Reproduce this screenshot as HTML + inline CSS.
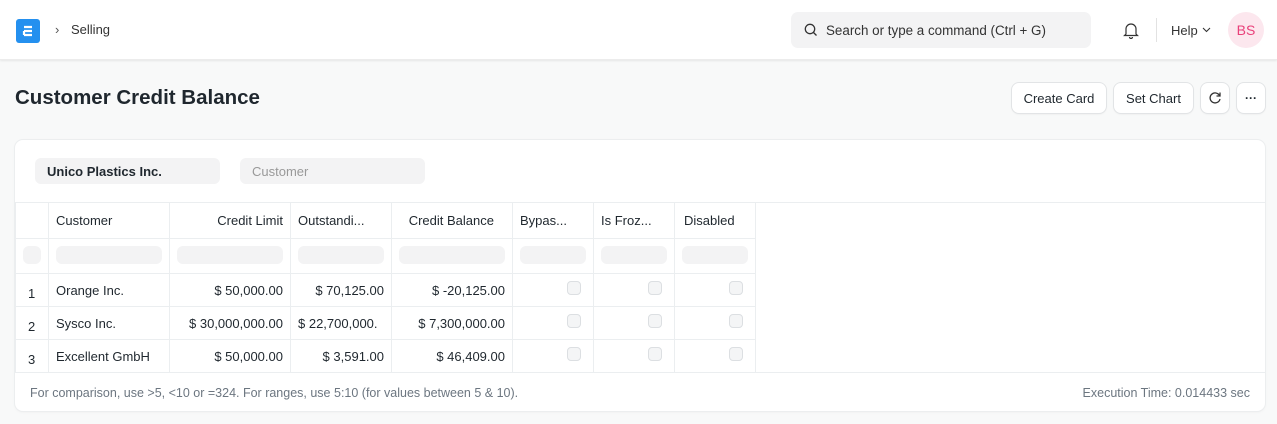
<!DOCTYPE html>
<html><head><style>
*{box-sizing:border-box;margin:0;padding:0}
body{width:1277px;height:424px;background:#f8f9f9;font-family:"Liberation Sans",sans-serif;color:#1f272e;position:relative;overflow:hidden;font-size:13px}
.nav{position:absolute;left:0;top:0;width:1277px;height:60px;background:#fff;box-shadow:0 1px 2px rgba(0,0,0,.08);border-bottom:1px solid #ececec}
.abs{position:absolute}
.btn{position:absolute;top:83px;height:30px;background:#fff;border-radius:7px;box-shadow:0 0 0 1px #e2e4e6,0 1px 2px rgba(0,0,0,.08);font-size:13px;display:flex;align-items:center;justify-content:center;color:#1f272e}
.card{position:absolute;left:15px;top:140px;width:1250px;height:271px;background:#fff;border-radius:8px;box-shadow:0 0 0 1px #eceeef,0 1px 3px rgba(0,0,0,.05)}
.field{position:absolute;top:158px;height:26px;width:185px;background:#f3f3f4;border-radius:6px;font-size:13px;padding:6px 12px}
.vl{position:absolute;width:1px;background:#ebeef0;top:203px;height:170px}
.hl{position:absolute;height:1px;background:#ebeef0;left:15px;width:741px}
.t{position:absolute;font-size:13px;color:#1f272e;white-space:nowrap}
.r{text-align:right}
.pill{position:absolute;top:246px;height:18px;background:#f3f3f4;border-radius:6px}
.cb{position:absolute;width:14px;height:14px;border:1px solid #dcdfe2;background:#f4f5f6;border-radius:4px}
</style></head><body>
<div class="nav">
 <div class="abs" style="left:16px;top:19px;width:24px;height:24px;background:#2490ef;border-radius:3px"></div>
 <svg class="abs" style="left:16px;top:19px" width="24" height="24"><path d="M8 8h8M8 12h8M8 16h8M8 12v4" stroke="#fff" stroke-width="2.2" fill="none"/></svg>
 <div class="t" style="left:55px;top:22px;color:#555">›</div>
 <div class="t" style="left:71px;top:22px;color:#333">Selling</div>
 <div class="abs" style="left:791px;top:12px;width:300px;height:36px;background:#f3f3f4;border-radius:7px"></div>
 <svg class="abs" style="left:804px;top:23px" width="14" height="14"><circle cx="6" cy="6" r="4.7" stroke="#333" stroke-width="1.3" fill="none"/><path d="M9.5 9.5l3 3" stroke="#333" stroke-width="1.3"/></svg>
 <div class="t" style="left:826px;top:23px;color:#333;font-size:13.4px">Search or type a command (Ctrl + G)</div>
 <svg class="abs" style="left:1123px;top:21px" width="16" height="18"><path d="M3 13V8a5 5 0 0110 0v5l1.5 1.5h-13zM6.5 16a1.5 1.5 0 003 0" stroke="#333" stroke-width="1.2" fill="none"/></svg>
 <div class="abs" style="left:1156px;top:18px;width:1px;height:24px;background:#e2e2e2"></div>
 <div class="t" style="left:1171px;top:23px;color:#333">Help</div>
 <svg class="abs" style="left:1202px;top:27px" width="9" height="6"><path d="M1 1l3.5 3.5L8 1" stroke="#333" stroke-width="1.1" fill="none"/></svg>
 <div class="abs" style="left:1228px;top:12px;width:36px;height:36px;border-radius:50%;background:#fce7ee;color:#e9407a;font-size:14px;display:flex;align-items:center;justify-content:center">BS</div>
</div>
<div class="t" style="left:15px;top:86px;font-size:20.5px;font-weight:bold">Customer Credit Balance</div>
<div class="btn" style="left:1012px;width:94px">Create Card</div>
<div class="btn" style="left:1114px;width:79px">Set Chart</div>
<div class="btn" style="left:1201px;width:28px"><svg width="14" height="14"><path d="M11.5 4.5A5 5 0 1012 8" stroke="#333" stroke-width="1.3" fill="none"/><path d="M12 1.5v3.5H8.5" stroke="#333" stroke-width="1.3" fill="none"/></svg></div>
<div class="btn" style="left:1237px;width:28px;font-weight:bold;font-size:12px">···</div>
<div class="card"></div>
<div class="field" style="left:35px;font-weight:bold;color:#1f272e">Unico Plastics Inc.</div>
<div class="field" style="left:240px;color:#999">Customer</div>
<div class="hl" style="top:202px;width:1250px"></div>
<div class="hl" style="top:238px"></div>
<div class="hl" style="top:273px"></div>
<div class="hl" style="top:306px"></div>
<div class="hl" style="top:339px"></div>
<div class="hl" style="top:372px;width:1250px"></div>
<div class="vl" style="left:15px"></div><div class="vl" style="left:48px"></div><div class="vl" style="left:169px"></div><div class="vl" style="left:290px"></div><div class="vl" style="left:391px"></div><div class="vl" style="left:512px"></div><div class="vl" style="left:593px"></div><div class="vl" style="left:674px"></div><div class="vl" style="left:755px"></div>
<div class="t" style="left:56px;top:213px">Customer</div>
<div class="t r" style="left:169px;width:114px;top:213px">Credit Limit</div>
<div class="t" style="left:298px;top:213px">Outstandi...</div>
<div class="t r" style="left:391px;width:103px;top:213px">Credit Balance</div>
<div class="t" style="left:520px;top:213px">Bypas...</div>
<div class="t" style="left:601px;top:213px">Is Froz...</div>
<div class="t" style="left:684px;top:213px">Disabled</div>
<div class="pill" style="left:23px;width:18px"></div><div class="pill" style="left:56px;width:106px"></div><div class="pill" style="left:177px;width:106px"></div><div class="pill" style="left:298px;width:86px"></div><div class="pill" style="left:399px;width:106px"></div><div class="pill" style="left:520px;width:66px"></div><div class="pill" style="left:601px;width:66px"></div><div class="pill" style="left:682px;width:66px"></div>
<div class="t" style="left:28px;top:286px">1</div><div class="t" style="left:56px;top:283px">Orange Inc.</div>
<div class="t r" style="left:169px;width:114px;top:283px">$ 50,000.00</div><div class="t r" style="left:290px;width:94px;top:283px">$ 70,125.00</div><div class="t r" style="left:391px;width:114px;top:283px">$ -20,125.00</div>
<div class="t" style="left:28px;top:319px">2</div><div class="t" style="left:56px;top:316px">Sysco Inc.</div>
<div class="t r" style="left:169px;width:114px;top:316px">$ 30,000,000.00</div><div class="t" style="left:298px;width:92px;top:316px;overflow:hidden">$ 22,700,000.</div><div class="t r" style="left:391px;width:114px;top:316px">$ 7,300,000.00</div>
<div class="t" style="left:28px;top:352px">3</div><div class="t" style="left:56px;top:349px">Excellent GmbH</div>
<div class="t r" style="left:169px;width:114px;top:349px">$ 50,000.00</div><div class="t r" style="left:290px;width:94px;top:349px">$ 3,591.00</div><div class="t r" style="left:391px;width:114px;top:349px">$ 46,409.00</div>
<div class="cb" style="left:567px;top:281px"></div><div class="cb" style="left:648px;top:281px"></div><div class="cb" style="left:729px;top:281px"></div>
<div class="cb" style="left:567px;top:314px"></div><div class="cb" style="left:648px;top:314px"></div><div class="cb" style="left:729px;top:314px"></div>
<div class="cb" style="left:567px;top:347px"></div><div class="cb" style="left:648px;top:347px"></div><div class="cb" style="left:729px;top:347px"></div>
<div class="t" style="left:30px;top:386px;font-size:12.5px;color:#6c7680">For comparison, use &gt;5, &lt;10 or =324. For ranges, use 5:10 (for values between 5 &amp; 10).</div>
<div class="t" style="right:27px;top:386px;font-size:12.5px;color:#6c7680">Execution Time: 0.014433 sec</div>
</body></html>
